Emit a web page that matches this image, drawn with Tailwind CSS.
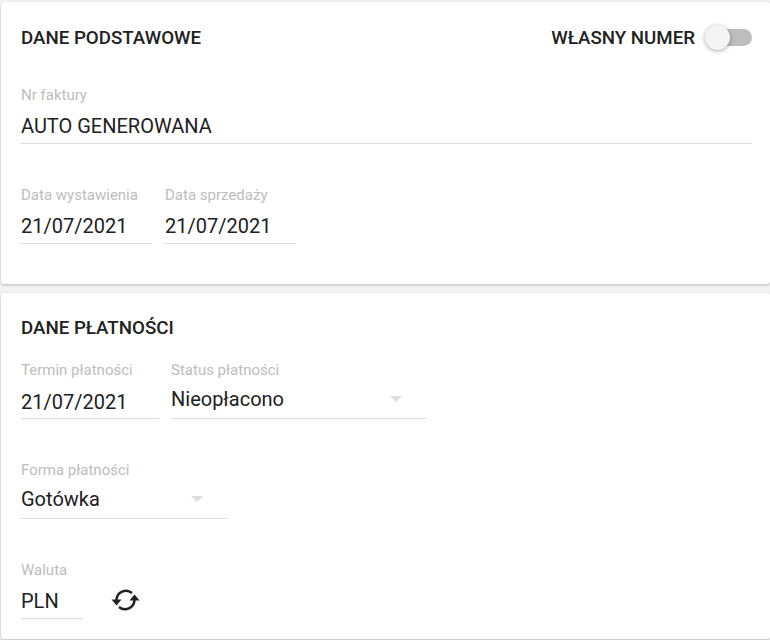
<!DOCTYPE html>
<html lang="pl">
<head>
    <meta charset="UTF-8">
    <title>Faktura</title>
    <script src="https://cdn.jsdelivr.net/npm/@tailwindcss/browser@4"></script>
</head>
<body class="bg-[#f3f3f3] font-['Roboto',sans-serif] text-[#212121] h-[640px] overflow-hidden">
    <div class="pl-px pt-[2px]">
        <!-- Dane podstawowe -->
        <section class="bg-white rounded-[3px] shadow-[0_1px_3px_rgba(0,0,0,0.25)] h-[282px] pl-5 pr-[18px]">
            <div class="flex items-center justify-between pt-[22px] h-[48px]">
                <h2 class="mt-[2px] text-[18.72px] leading-6 font-medium">DANE PODSTAWOWE</h2>
                <div class="flex items-center">
                    <span class="mt-[2px] text-[18.72px] leading-6 font-medium">WŁASNY NUMER</span>
                    <div class="relative ml-[10px] w-[47px] h-[17px]">
                        <div class="absolute right-0 top-0 w-[40px] h-[17px] rounded-full bg-[#bdbdbd]"></div>
                        <div class="absolute left-0 top-[-4px] w-[25px] h-[25px] rounded-full bg-[#f4f4f4] shadow-[0_1px_4px_rgba(0,0,0,0.35)]"></div>
                    </div>
                </div>
            </div>
            <div class="mt-[35px]">
                <div class="text-[15px] leading-[20px] text-[#bdbdbd]">Nr faktury</div>
                <div class="text-xl leading-[28px] mt-[7px] pb-[3px] border-b border-[#dddddd]">AUTO GENEROWANA</div>
            </div>
            <div class="flex gap-[13px] mt-[41px]">
                <div class="w-[131px]">
                    <div class="text-[15px] leading-[20px] text-[#bdbdbd]">Data wystawienia</div>
                    <div class="text-xl leading-[28px] mt-[7px] pb-[3px] border-b border-[#dddddd]">21/07/2021</div>
                </div>
                <div class="w-[131px]">
                    <div class="text-[15px] leading-[20px] text-[#bdbdbd]">Data sprzedaży</div>
                    <div class="text-xl leading-[28px] mt-[7px] pb-[3px] border-b border-[#dddddd]">21/07/2021</div>
                </div>
            </div>
        </section>

        <!-- Dane platnosci -->
        <section class="bg-white rounded-[3px] shadow-[0_1px_3px_rgba(0,0,0,0.25)] h-[346px] mt-[9px] pl-5 pr-[18px]">
            <h2 class="text-[18.72px] leading-6 font-medium pt-[23px] h-[44px] box-content">DANE PŁATNOŚCI</h2>
            <div class="flex gap-3">
                <div class="w-[138px]">
                    <div class="text-[15px] leading-[20px] text-[#bdbdbd]">Termin płatności</div>
                    <div class="text-xl leading-[28px] mt-[8px] pb-[2px] border-b border-[#dddddd]">21/07/2021</div>
                </div>
                <div class="w-[255px]">
                    <div class="text-[15px] leading-[20px] text-[#bdbdbd]">Status płatności</div>
                    <div class="flex items-center justify-between text-xl leading-[28px] mt-[5px] pb-[5px] border-b border-[#dddddd]">
                        <span>Nieopłacono</span>
                        <span class="mr-6 w-0 h-0 border-x-[6px] border-x-transparent border-t-[6px] border-t-[#dddddd]"></span>
                    </div>
                </div>
            </div>
            <div class="w-[206px] mt-[41px]">
                <div class="text-[15px] leading-[20px] text-[#bdbdbd]">Forma płatności</div>
                <div class="flex items-center justify-between text-xl leading-[28px] mt-[5px] pb-[5px] border-b border-[#dddddd]">
                    <span>Gotówka</span>
                    <span class="mr-6 w-0 h-0 border-x-[6px] border-x-transparent border-t-[6px] border-t-[#dddddd]"></span>
                </div>
            </div>
            <div class="flex mt-[41px]">
                <div class="w-[62px]">
                    <div class="text-[15px] leading-[20px] text-[#bdbdbd]">Waluta</div>
                    <div class="text-xl leading-[28px] mt-[7px] pb-[3px] border-b border-[#dddddd]">PLN</div>
                </div>
                <svg class="ml-[28px] mt-[28px]" width="29" height="23" viewBox="0 0 29 23" fill="none">
                    <path d="M5.5 12A9.5 9.5 0 0 1 21 5" stroke="#212121" stroke-width="2.5"/>
                    <path d="M23.5 12A9.5 9.5 0 0 1 8 19" stroke="#212121" stroke-width="2.5"/>
                    <path d="M.5 11.5h10l-5 6z" fill="#212121"/>
                    <path d="M18.5 12.5h10l-5-6z" fill="#212121"/>
                </svg>
            </div>
        </section>
    </div>
</body>
</html>
